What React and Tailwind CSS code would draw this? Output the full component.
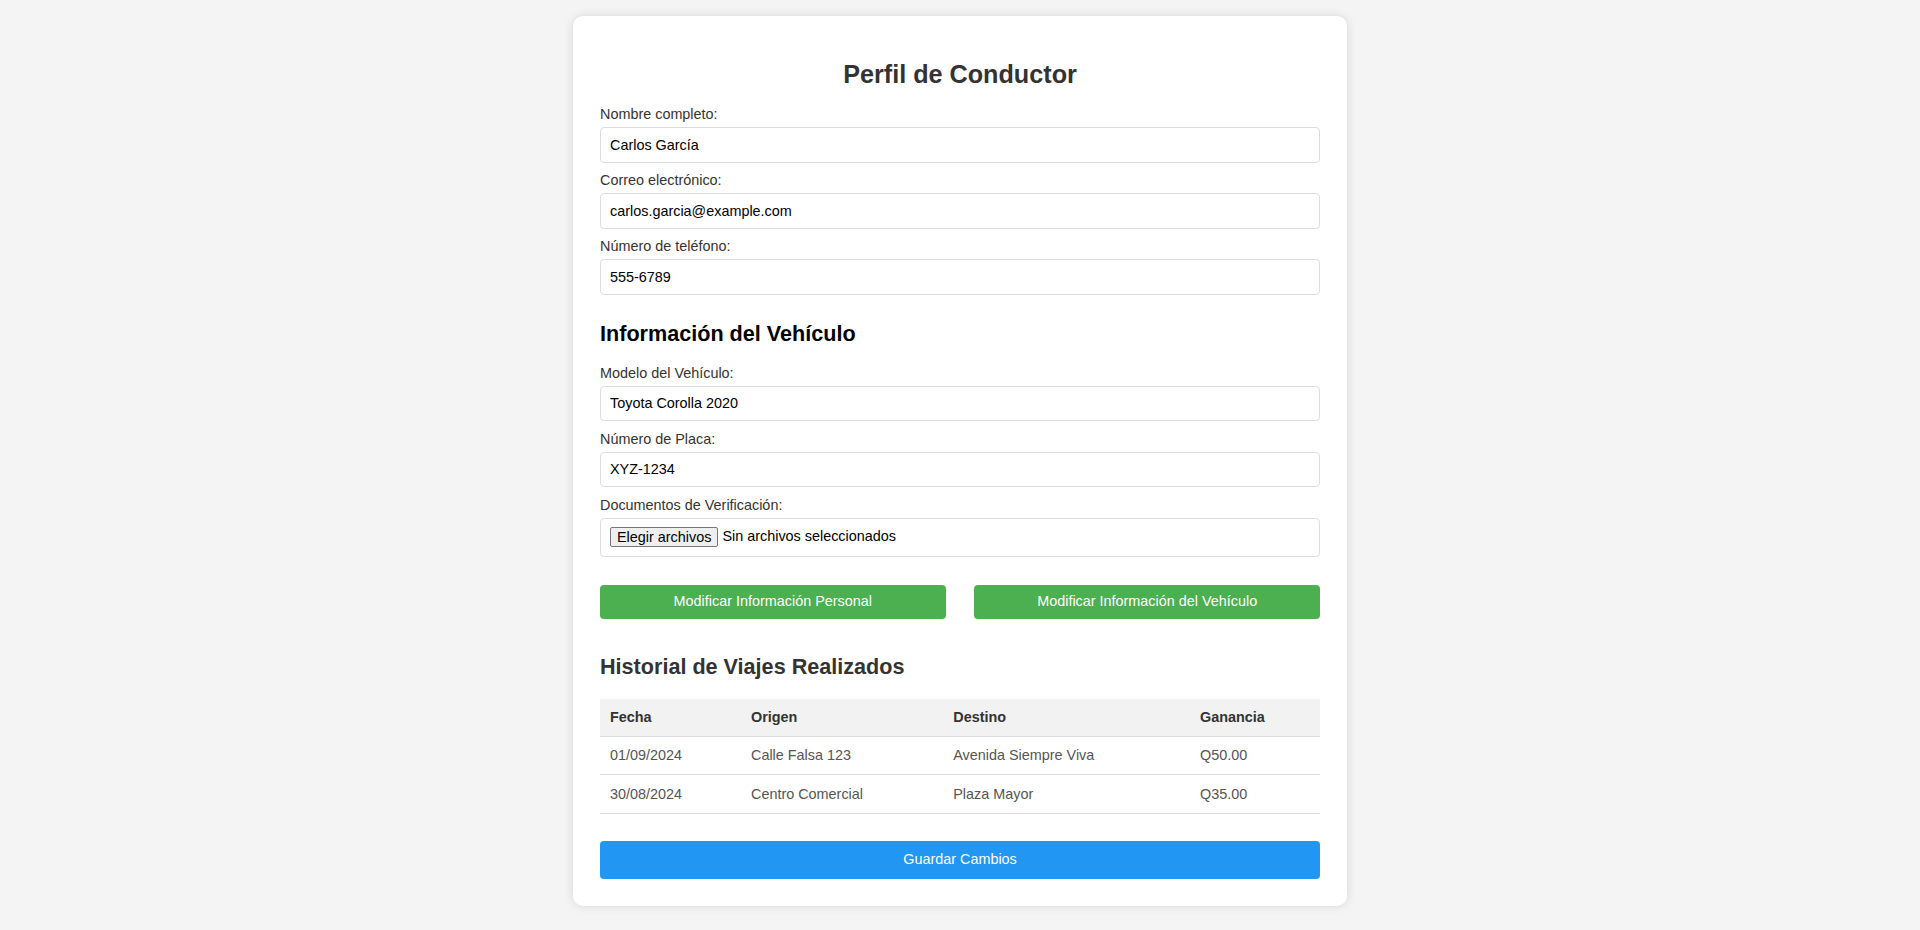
import React from 'react';

const font = { fontFamily: '"Liberation Sans", Arial, sans-serif' };

const Field = ({ label, value }) => (
  <div>
    <label className="block mb-[5px] leading-[16px] text-[#333]">{label}</label>
    <input
      type="text"
      defaultValue={value}
      className="block w-full h-[35.5px] mb-[9.5px] px-[9px] border border-[#ddd] rounded-[4px] text-black text-[14.4px] outline-none"
    />
  </div>
);

const trips = [
  { fecha: '01/09/2024', origen: 'Calle Falsa 123', destino: 'Avenida Siempre Viva', ganancia: 'Q50.00' },
  { fecha: '30/08/2024', origen: 'Centro Comercial', destino: 'Plaza Mayor', ganancia: 'Q35.00' },
];

export default function App() {
  return (
    <div className="min-h-screen bg-[#f4f4f4] pt-[16px] pb-[25px] text-[14.4px]" style={font}>
      <div className="w-[774px] mx-auto bg-white rounded-[10px] shadow-[0_0_10px_rgba(0,0,0,0.12)] px-[27px] pt-[27px] pb-[27px]">
        <h1 className="text-center text-[25.2px] font-bold text-[#333] leading-[28px] mt-[17px] mb-[18px]">
          Perfil de Conductor
        </h1>

        <Field label="Nombre completo:" value="Carlos García" />
        <Field label="Correo electrónico:" value="carlos.garcia@example.com" />
        <Field label="Número de teléfono:" value="555-6789" />

        {/* input margin collapses into this one, so the full gap lives here */}
        <h2 className="text-[21.6px] font-bold text-black leading-[24px] mt-[27.5px] mb-[18.5px]">
          Información del Vehículo
        </h2>

        <Field label="Modelo del Vehículo:" value="Toyota Corolla 2020" />
        <Field label="Número de Placa:" value="XYZ-1234" />
        <div>
          <label className="block mb-[5px] leading-[16px] text-[#333]">Documentos de Verificación:</label>
          <div className="flex items-center w-full h-[39.5px] px-[9px] border border-[#ddd] rounded-[4px] text-black">
            <span className="inline-flex items-center h-[20px] px-[6px] bg-[#efefef] border border-[#767676] rounded-[2px] leading-[16px]">
              Elegir archivos
            </span>
            <span className="ml-[4px]">Sin archivos seleccionados</span>
          </div>
        </div>

        <div className="flex justify-between mt-[27.5px]">
          <button className="w-[48%] h-[34px] bg-[#4CAF50] text-white rounded-[4px]">
            Modificar Información Personal
          </button>
          <button className="w-[48%] h-[34px] bg-[#4CAF50] text-white rounded-[4px]">
            Modificar Información del Vehículo
          </button>
        </div>

        <h2 className="text-[21.6px] font-bold text-[#333] leading-[24px] mt-[36.5px] mb-[20px]">
          Historial de Viajes Realizados
        </h2>

        <table className="w-full border-collapse">
          <thead>
            <tr className="bg-[#f2f2f2]">
              {['Fecha', 'Origen', 'Destino', 'Ganancia'].map((h) => (
                <th key={h} className="text-left font-bold text-[#333] px-[10px] py-[10px] leading-[16.5px] border-b border-[#ddd]">
                  {h}
                </th>
              ))}
            </tr>
          </thead>
          <tbody>
            {trips.map((t) => (
              <tr key={t.fecha}>
                <td className="px-[10px] py-[10.5px] leading-[16.5px] text-[#555] border-b border-[#ddd]">{t.fecha}</td>
                <td className="px-[10px] py-[10.5px] leading-[16.5px] text-[#555] border-b border-[#ddd]">{t.origen}</td>
                <td className="px-[10px] py-[10.5px] leading-[16.5px] text-[#555] border-b border-[#ddd]">{t.destino}</td>
                <td className="px-[10px] py-[10.5px] leading-[16.5px] text-[#555] border-b border-[#ddd]">{t.ganancia}</td>
              </tr>
            ))}
          </tbody>
        </table>

        <button className="block w-full h-[38px] mt-[27.5px] bg-[#2196F3] text-white rounded-[4px]">
          Guardar Cambios
        </button>
      </div>
    </div>
  );
}
